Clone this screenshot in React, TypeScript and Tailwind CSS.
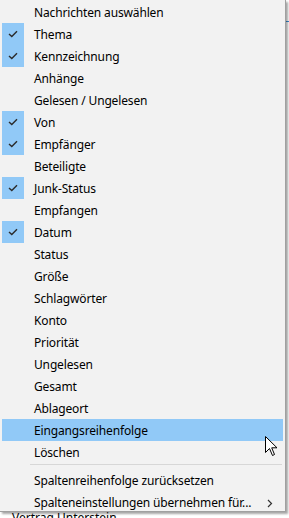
import React from "react";

const items = [
  { label: "Nachrichten auswählen" },
  { label: "Thema", checked: true },
  { label: "Kennzeichnung", checked: true },
  { label: "Anhänge" },
  { label: "Gelesen / Ungelesen" },
  { label: "Von", checked: true },
  { label: "Empfänger", checked: true },
  { label: "Beteiligte" },
  { label: "Junk-Status", checked: true },
  { label: "Empfangen" },
  { label: "Datum", checked: true },
  { label: "Status" },
  { label: "Größe" },
  { label: "Schlagwörter" },
  { label: "Konto" },
  { label: "Priorität" },
  { label: "Ungelesen" },
  { label: "Gesamt" },
  { label: "Ablageort" },
  { label: "Eingangsreihenfolge", active: true },
  { label: "Löschen" },
];

function Check() {
  return (
    <svg width="10" height="8" viewBox="0 0 10 8" className="text-[#2b2b2b]">
      <path d="M1 4 L3.8 6.6 L9 1.2" fill="none" stroke="currentColor" strokeWidth="1.4" />
    </svg>
  );
}

function Row({ label, checked, active, arrow }: { label: string; checked?: boolean; active?: boolean; arrow?: boolean }) {
  return (
    <div className={`flex items-center h-[22px] mx-[2px] ${active ? "bg-[#91c9f7]" : ""}`}>
      <div className={`w-[22px] h-[22px] flex items-center justify-center ${checked ? "bg-[#91c9f7]" : ""}`}>
        {checked && <Check />}
      </div>
      <span className="pl-[10px] pt-[2px] flex-1 text-[12px] tracking-[-0.15px] text-black leading-none">{label}</span>
      {arrow && (
        <svg width="6" height="9" viewBox="0 0 6 9" className="mr-[10px] mt-[2px] text-[#333]">
          <path d="M1 1 L4.5 4.5 L1 8" fill="none" stroke="currentColor" strokeWidth="1.2" />
        </svg>
      )}
    </div>
  );
}

export default function App() {
  return (
    <div className="relative w-[289px] h-[518px] overflow-hidden bg-white" style={{ fontFamily: "'Noto Sans', sans-serif" }}>
      {/* list behind the menu */}
      <div className="absolute left-[12px] top-[509px] text-[12px] text-black underline">Vertrag Unterstein</div>
      <div className="absolute right-0 top-[21px] w-[4px] h-[1px] bg-[#3c8fd6]" />

      {/* context menu */}
      <div className="absolute left-0 top-0 w-[286px] h-[512px] bg-[#f2f2f2] border-r border-b border-[#a0a0a0] pt-[1px] shadow-[2px_2px_2px_rgba(0,0,0,0.35)]">
        {items.map((it) => (
          <Row key={it.label} {...it} />
        ))}
        <div className="h-[6px] flex items-start pt-[1px]">
          <div className="ml-[30px] mr-[3px] flex-1 h-px bg-[#d7d7d7]" />
        </div>
        <Row label="Spaltenreihenfolge zurücksetzen" />
        <Row label="Spalteneinstellungen übernehmen für..." arrow />
      </div>

      {/* mouse cursor */}
      <svg className="absolute left-[265px] top-[436px]" width="14" height="22" viewBox="0 0 14 22">
        <path d="M0.5 0.5 L0.5 16.5 L4.5 12.5 L7.5 19.5 L9.5 18.5 L6.7 11.8 L12 11.8 Z" fill="white" stroke="black" strokeWidth="1" />
      </svg>
    </div>
  );
}
